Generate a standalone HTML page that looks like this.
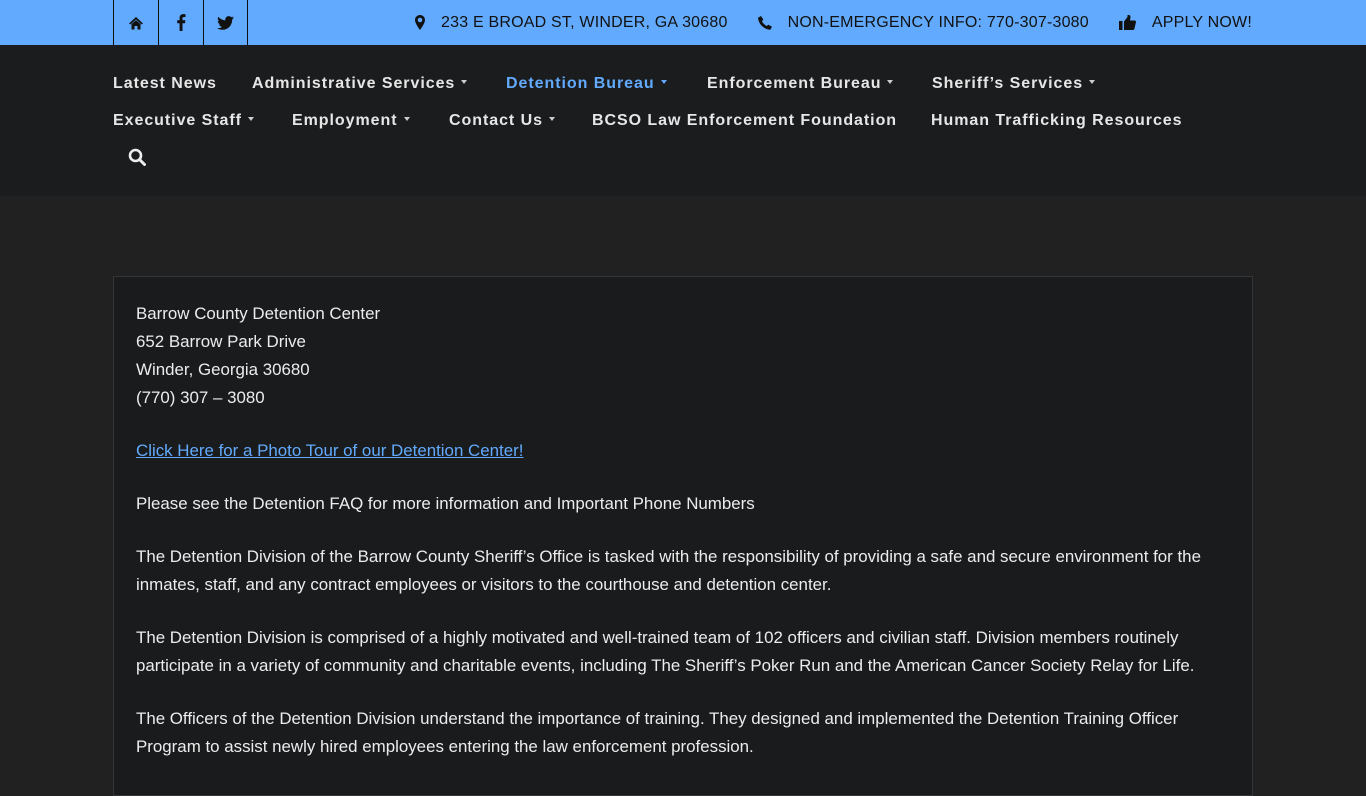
<!DOCTYPE html>
<html><head><meta charset="utf-8"><style>
*{margin:0;padding:0;box-sizing:border-box}
body{width:1366px;height:768px;overflow:hidden;background:#212121;font-family:"Liberation Sans",sans-serif;color:#e8e8e8}
.top{height:45px;background:#62aafd;position:relative;color:#111;font-size:16px;letter-spacing:.2px}
.soc{position:absolute;left:113px;top:0;height:45px;display:flex}
.soc div{width:45px;height:45px;border-left:1px solid #111;display:flex;align-items:center;justify-content:center}
.soc div:last-child{border-right:1px solid #111}
.info{position:absolute;right:114px;top:0;height:45px;display:flex;align-items:center;gap:0}
.info span{display:flex;align-items:center}
.nav{height:151px;background:#1b1c1e;position:relative}
.nav .l{position:absolute;font-weight:bold;font-size:16px;letter-spacing:.95px;color:#e6e6e6;white-space:nowrap}
.car{display:inline-block;width:0;height:0;border-left:3.5px solid transparent;border-right:3.5px solid transparent;border-top:4px solid #ccc;vertical-align:middle;margin-left:6px;position:relative;top:-2px}
.box{position:absolute;left:113px;top:276px;width:1140px;height:520px;background:#1a1b1d;border:1px solid #343536;padding:23px 22px;font-size:16.9px;line-height:28px;color:#ececec}
.box p{margin-bottom:25px}
a{color:#62aafd;text-decoration:underline}
</style></head><body>
<div class="top">
 <div class="soc">
  <div><svg width="16" height="14" viewBox="0 0 16 14"><path d="M8 1 L1 7.5 L2.3 8.5 L8 3.5 L13.7 8.5 L15 7.5 Z M3.5 8 L8 4.3 L12.5 8 V13.5 H9.5 V10 H6.5 V13.5 H3.5 Z" fill="#111"/></svg></div>
  <div><svg width="10" height="17" viewBox="0 0 10 17"><path d="M6.5 17V9.3H9l.4-3H6.5V4.5c0-.9.3-1.5 1.5-1.5h1.5V.3C9.2.2 8.3.1 7.3.1 5.1.1 3.6 1.4 3.6 3.9v2.4H1.2v3h2.4V17z" fill="#111"/></svg></div>
  <div><svg width="17" height="14" viewBox="0 0 24 20"><path d="M24 2.4c-.9.4-1.8.6-2.8.8 1-.6 1.8-1.6 2.200-2.700-1 .6-2 1-3.1 1.2C19.4.7 18.1.1 16.6.1c-2.7 0-4.900 2.2-4.900 4.900 0 .4 0 .8.1 1.1C7.7 5.9 4.1 4 1.7 1 1.2 1.8 1 2.6 1 3.5c0 1.7.9 3.2 2.2 4.1-.8 0-1.6-.2-2.2-.6v.1c0 2.4 1.7 4.4 3.9 4.8-.4.1-.8.2-1.3.2-.3 0-.6 0-.9-.1.6 2 2.4 3.4 4.6 3.4-1.7 1.3-3.8 2.1-6.1 2.1H0c2.2 1.4 4.8 2.2 7.5 2.2 9.1 0 14-7.5 14-14v-.6c1-.7 1.8-1.6 2.5-2.5z" fill="#111"/></svg></div>
 </div>
 <div class="info">
  <span><svg width="10" height="15" viewBox="0 0 10 15"><path d="M5 0C2.2 0 0 2.2 0 5c0 3.5 5 10 5 10s5-6.5 5-10C10 2.2 7.8 0 5 0zm0 7.3A2.3 2.3 0 1 1 5 2.7a2.3 2.3 0 0 1 0 4.6z" fill="#111"/></svg><span style="margin-left:16px">233 E BROAD ST, WINDER, GA 30680</span></span>
  <span style="margin-left:30px"><svg width="14" height="14" viewBox="0 0 14 14"><path d="M3 0L5.3 3.5 4 5.2c.8 1.8 2.6 3.7 4.8 4.8l1.5-1.4L14 10.8 12.3 13.8C6 13.5.5 8 0 1.7z" fill="#111"/></svg><span style="margin-left:16px">NON-EMERGENCY INFO: 770-307-3080</span></span>
  <span style="margin-left:30px"><svg width="17" height="15" viewBox="0 0 17 15"><path d="M0 6h3.5v9H0z M5 6.5L8.5 2V0h1.5c1 0 1.5 1 1.5 2L11 5.5h4.5c1 0 1.5.7 1.5 1.5l-1.5 6.5c-.2.9-.8 1.5-1.7 1.5H5z" fill="#111"/></svg><span style="margin-left:16px">APPLY NOW!</span></span>
 </div>
</div>
<div class="nav">
 <div class="l" style="left:113px;top:30px">Latest News</div>
 <div class="l" style="left:252px;top:30px">Administrative Services<span class="car"></span></div>
 <div class="l" style="left:506px;top:30px;color:#62aafd">Detention Bureau<span class="car" style="border-top-color:#62aafd"></span></div>
 <div class="l" style="left:707px;top:30px">Enforcement Bureau<span class="car"></span></div>
 <div class="l" style="left:932px;top:30px">Sheriff’s Services<span class="car"></span></div>
 <div class="l" style="left:113px;top:67px">Executive Staff<span class="car"></span></div>
 <div class="l" style="left:292px;top:67px">Employment<span class="car"></span></div>
 <div class="l" style="left:449px;top:67px">Contact Us<span class="car"></span></div>
 <div class="l" style="left:592px;top:67px">BCSO Law Enforcement Foundation</div>
 <div class="l" style="left:931px;top:67px">Human Trafficking Resources</div>
 <svg style="position:absolute;left:128px;top:103px" width="18" height="18" viewBox="0 0 18 18"><circle cx="7.5" cy="7.5" r="5.5" stroke="#eee" stroke-width="2.6" fill="none"/><path d="M11.5 11.5L16.5 16.5" stroke="#eee" stroke-width="3" stroke-linecap="round"/></svg>
</div>
<div class="box">
 <p>Barrow County Detention Center<br>652 Barrow Park Drive<br>Winder, Georgia 30680<br>(770) 307 – 3080</p>
 <p><a>Click Here for a Photo Tour of our Detention Center!</a></p>
 <p>Please see the Detention FAQ for more information and Important Phone Numbers</p>
 <p>The Detention Division of the Barrow County Sheriff’s Office is tasked with the responsibility of providing a safe and secure environment for the inmates, staff, and any contract employees or visitors to the courthouse and detention center.</p>
 <p>The Detention Division is comprised of a highly motivated and well-trained team of 102 officers and civilian staff. Division members routinely participate in a variety of community and charitable events, including The Sheriff’s Poker Run and the American Cancer Society Relay for Life.</p>
 <p>The Officers of the Detention Division understand the importance of training. They designed and implemented the Detention Training Officer Program to assist newly hired employees entering the law enforcement profession.</p>
</div>
</body></html>
